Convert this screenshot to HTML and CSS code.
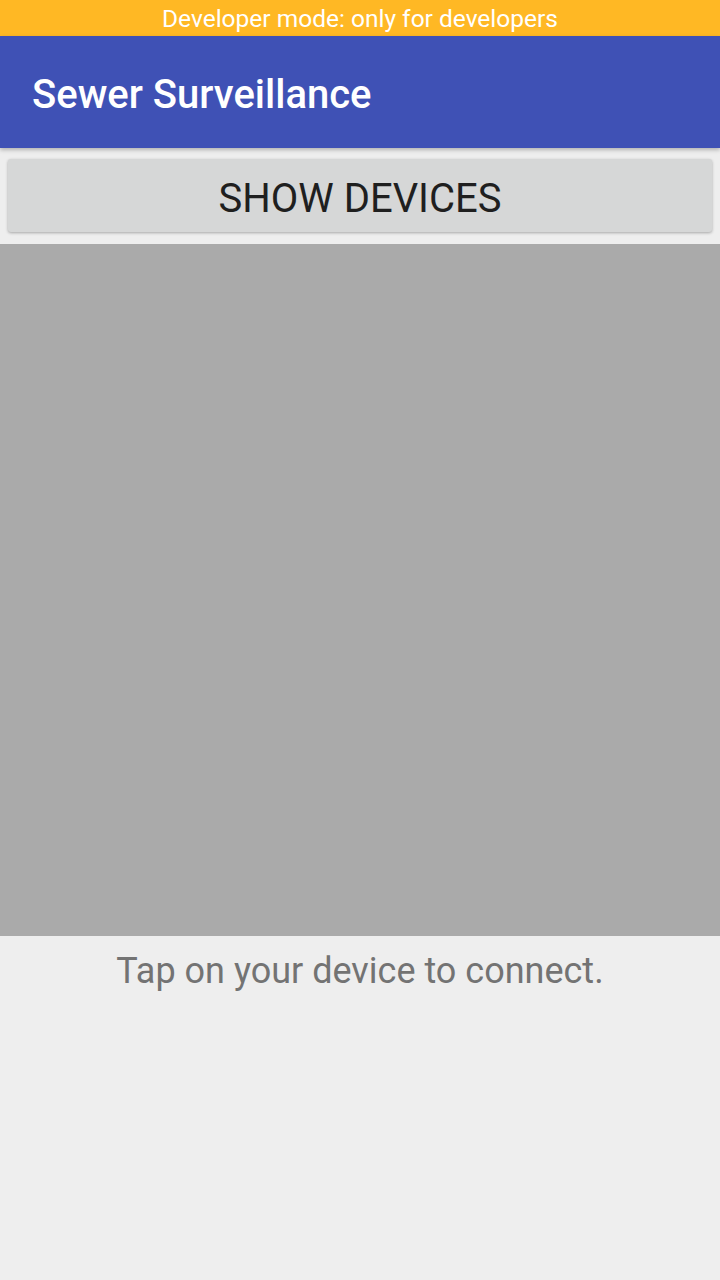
FILE: index.html
```html
<!DOCTYPE html>
<html>
<head>
<meta charset="utf-8">
<link rel="stylesheet" href="styles.css">
</head>
<body>
<div class="status">Developer mode: only for developers</div>
<header class="appbar"><h1 class="title">Sewer Surveillance</h1></header>
<main class="content">
  <div class="btn-wrap"><button class="btn">SHOW DEVICES</button></div>
  <div class="list"></div>
  <p class="hint">Tap on your device to connect.</p>
</main>
</body>
</html>
```
FILE: styles.css
```css
html, body { margin: 0; padding: 0; }
body {
  width: 720px;
  height: 1280px;
  background: #eeeeee;
  font-family: Roboto, "Noto Sans", sans-serif;
  overflow: hidden;
}
.status {
  height: 36px;
  background: #ffb824;
  color: #ffffff;
  font-size: 24.5px;
  line-height: 38px;
  text-align: center;
}
.appbar {
  height: 112px;
  background: #3f51b5;
  display: flex;
  align-items: center;
  padding-left: 32px;
  box-shadow: 0 2px 4px rgba(0,0,0,0.25);
  position: relative;
  z-index: 1;
}
.title {
  margin: 0;
  color: #ffffff;
  font-size: 40px;
  font-weight: 500;
  padding-top: 5px;
}
.btn-wrap { padding: 11px 8px 0; }
.btn {
  display: block;
  width: 100%;
  height: 73px;
  border: none;
  border-radius: 3px;
  background: #d6d7d7;
  color: #1f1f1f;
  font-family: Roboto, sans-serif;
  font-size: 40px;
  padding: 6px 0 0;
  box-shadow: 0 1px 3px rgba(0,0,0,0.3);
}
.list {
  margin-top: 12px;
  height: 692px;
  background: #aaaaaa;
}
.hint {
  margin: 14px 0 0;
  text-align: center;
  color: #737373;
  font-size: 36px;
}
```
